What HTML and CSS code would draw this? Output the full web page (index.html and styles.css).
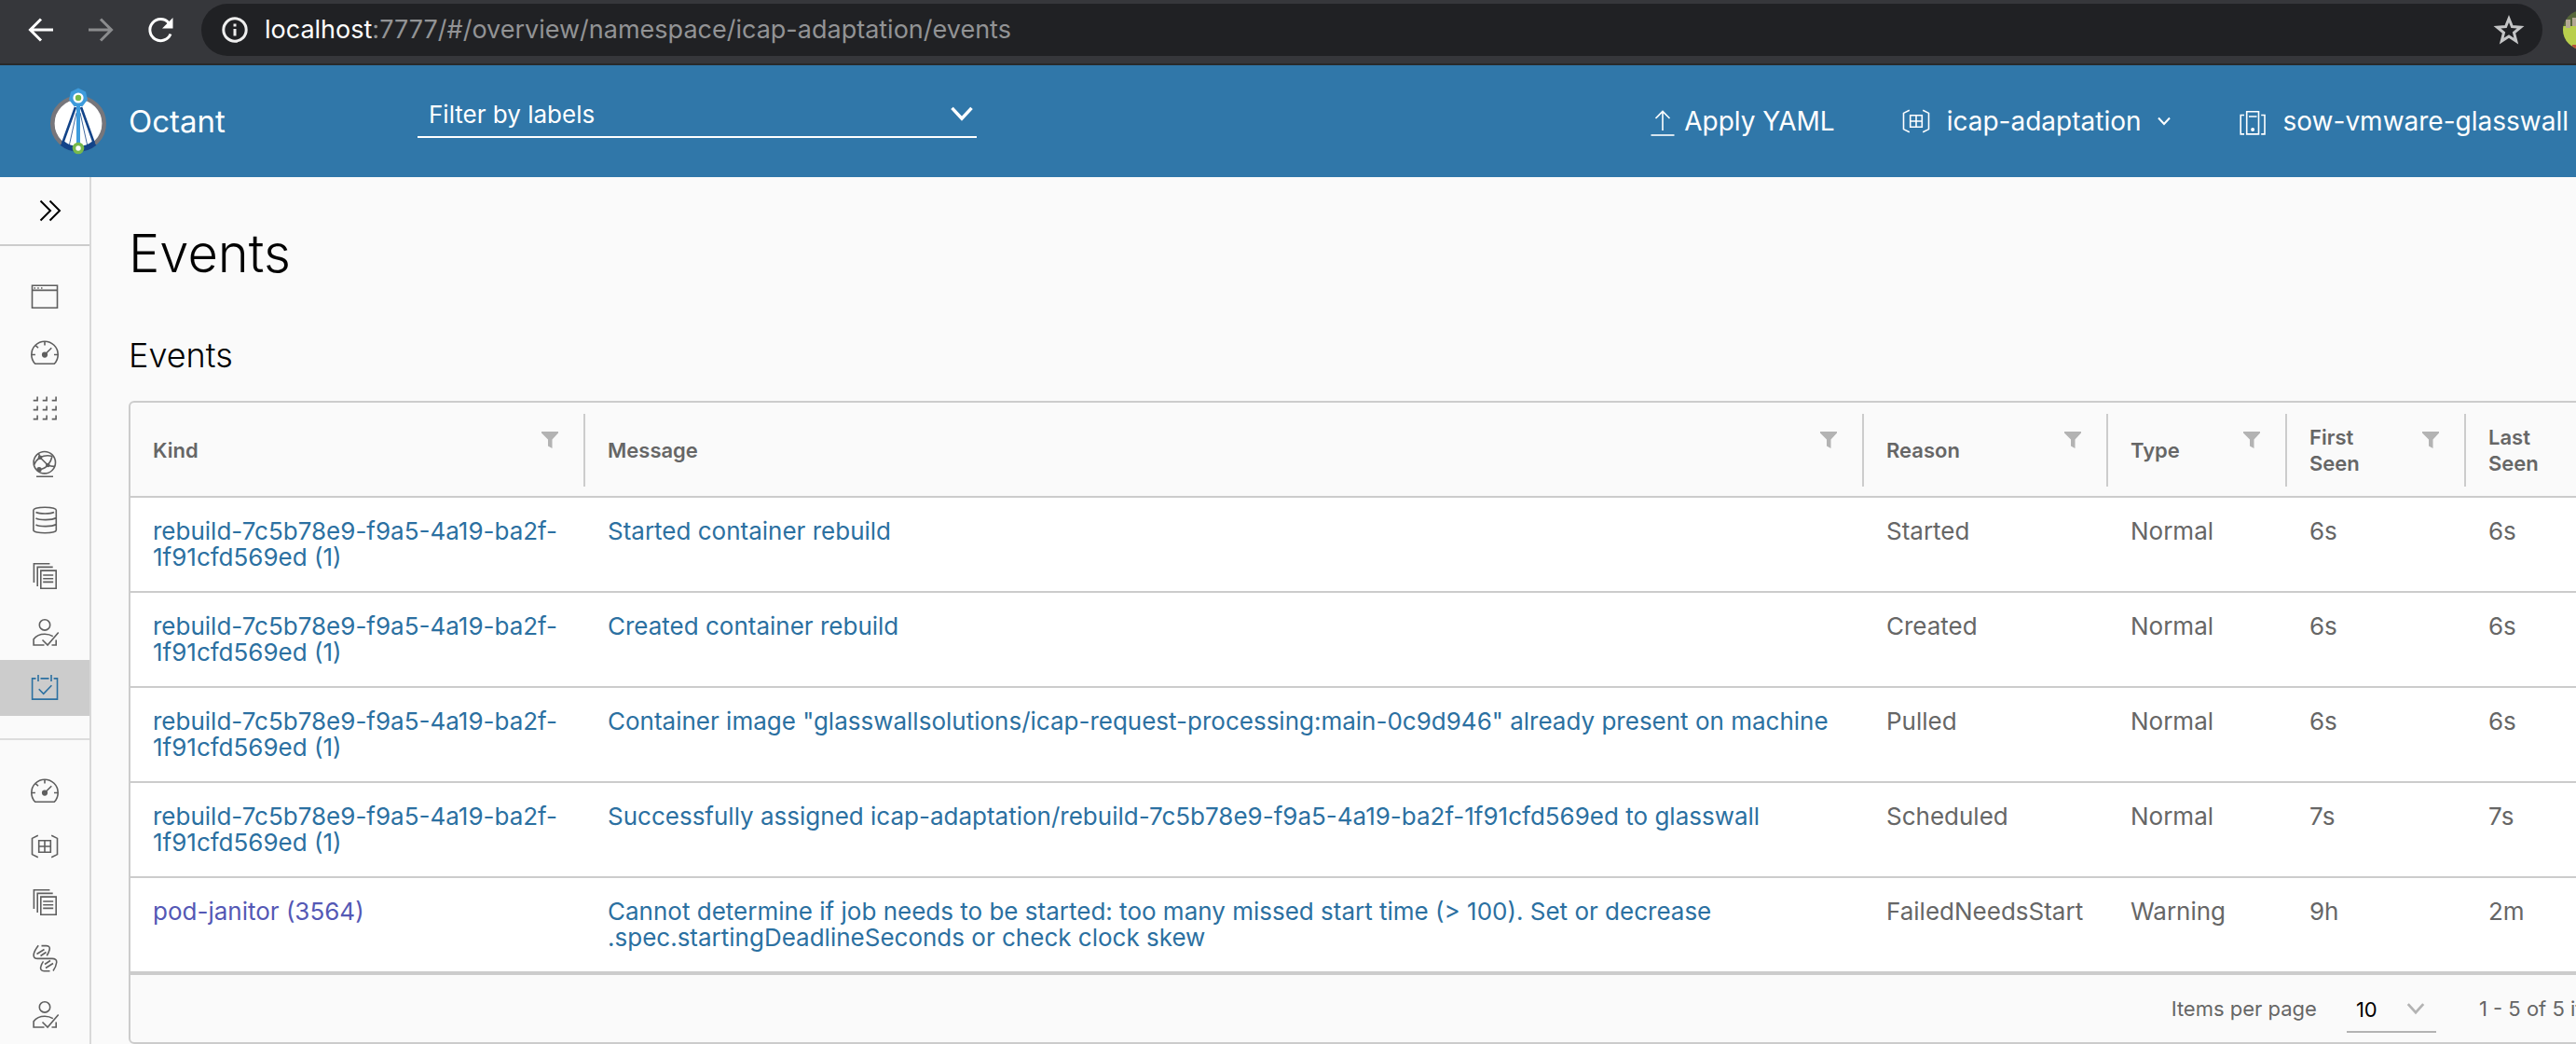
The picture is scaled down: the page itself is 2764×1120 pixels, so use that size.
FILE: index.html
```html
<!DOCTYPE html>
<html lang="en">
<head>
<meta charset="utf-8">
<meta name="viewport" content="width=device-width, initial-scale=1">
<title>Octant</title>
<link rel="stylesheet" href="styles.css">
</head>
<body>
<svg class="sprite" aria-hidden="true">
  <symbol id="i-gauge" viewBox="0 0 34 34">
    <path d="M6.7 29.2h20.6a14.2 14.2 0 1 0-20.6 0z"/>
    <path d="M17 5.5v4M2.9 19.5h4M27 19.5h4M7.3 9.6l2.7 2.7M17 19.5l7.3-7.2"/>
    <circle class="solid" cx="17" cy="19.6" r="2.3"/>
  </symbol>
  <symbol id="i-namespace" viewBox="0 0 34 34">
    <path d="M9.8 5.2L3.5 8.4v17.2l6.3 3.2M24.2 5.2l6.3 3.2v17.2l-6.3 3.2M10.7 10.7h12.6v12.6H10.7zM17 10.7v12.6M10.7 17h12.6"/>
  </symbol>
  <symbol id="i-docs" viewBox="0 0 34 34">
    <path d="M5.4 24V3.7h17M9.2 28V7.4h16.5M12.8 11.1h16.4v19.2H12.8zM15.2 16h11M15.2 19.7h11M15.2 23.4h11"/>
  </symbol>
  <symbol id="i-user" viewBox="0 0 34 34">
    <circle cx="17" cy="9.4" r="5.7"/>
    <path d="M16.5 31H5.1v-6.2c2.700-3.800 7-5.600 11.900-5.600 3.300 0 6.300.8 8.800 2.400M29.200 25.500V31h-4.700M14.500 25.500l5.600 5.600L31.700 17.500"/>
  </symbol>
  <symbol id="i-chevron" viewBox="0 0 16 16">
    <path d="M2 4.500l6 6.500 6-6.500"/>
  </symbol>
  <symbol id="i-filter" viewBox="0 0 18 18">
    <path d="M0 0h18v1.500l-6.500 7V18L7 15.500v-7l-7-7z"/>
  </symbol>
</svg>

<div class="page">
  <div class="toolbar">
    <nav class="toolbar-nav" aria-label="Browser">
      <button type="button" class="tool" aria-label="Back">
        <svg viewBox="0 0 32 32"><path d="M29 16H5M16 4.500L4.500 16 16 27.500"/></svg>
      </button>
      <button type="button" class="tool dim" aria-label="Forward">
        <svg viewBox="0 0 32 32"><path d="M3 16h24M16 4.500L27.500 16 16 27.500"/></svg>
      </button>
      <button type="button" class="tool" aria-label="Reload">
        <svg viewBox="0 0 32 32"><path d="M27 20.500A11.500 11.500 0 1 1 25 8.500"/><path class="solid" d="M29.500 3v11.500H18z"/></svg>
      </button>
    </nav>
    <div class="address">
      <svg class="info" viewBox="0 0 28 28"><circle cx="14" cy="14" r="12.200"/><path d="M14 13v7.500M14 7.500v3"/></svg>
      <span class="url"><span class="host">localhost</span>:7777/#/overview/namespace/icap-adaptation/events</span>
      <button type="button" class="star" aria-label="Bookmark">
        <svg viewBox="0 0 34 34"><path d="M17 5l3.400 8.600 9.200.6-7.100 5.900 2.300 9-7.800-5-7.800 5 2.300-9-7.100-5.900 9.200-.6z"/></svg>
      </button>
    </div>
    <svg class="avatar" viewBox="0 0 42 42">
      <path class="av-sky" d="M0 0h42v42H0z"/>
      <path class="av-grass" d="M0 17h42v25H0z"/>
      <path class="av-stone" d="M3 10h5v9H3zM10 8h5v9h-5z"/>
      <path class="av-red" d="M10 37h20v5H10z"/>
    </svg>
  </div>

  <header class="header">
    <div class="brand">
      <svg class="logo" viewBox="0 0 60 72">
        <circle cx="30" cy="38.500" r="27.700" fill="#fff" stroke="#77767b" stroke-width="4.600"/>
        <path d="M12.500 59.500a27.500 27.500 0 0 0 35 0" fill="none" stroke="#134489" stroke-width="6"/>
        <path d="M27 21L13 60M33 21l14 39" stroke="#134489" stroke-width="2.600"/>
        <path d="M28 27l-7.500 34M32 27l7.500 34" stroke="#134489" stroke-width=".8"/>
        <path d="M30 12v54" stroke="#3d9bdc" stroke-width="4"/>
        <path d="M30 .5l8 3.900 2 8.700-5.500 7h-9l-5.500-7 2-8.700z" fill="#3d9bdc"/>
        <circle cx="30" cy="11" r="5.600" fill="#fff"/>
        <circle cx="30" cy="11" r="3.200" fill="#77b94c"/>
        <circle cx="30" cy="65" r="4.500" fill="#fff" stroke="#77b94c" stroke-width="3.600"/>
      </svg>
      <span class="brand-name">Octant</span>
    </div>
    <div class="picker filter-picker">
      <select aria-label="Filter by labels"><option>Filter by labels</option></select>
      <svg class="picker-chevron" viewBox="0 0 16 16"><use href="#i-chevron"/></svg>
    </div>
    <div class="actions">
      <button type="button" class="action tight">
        <svg class="action-icon" viewBox="0 0 34 34"><path d="M17 27V6.500M9.500 14L17 6.500l7.500 7.500"/><path d="M4.500 32h25"/></svg>
        Apply YAML
      </button>
      <button type="button" class="action">
        <svg class="action-icon"><use href="#i-namespace"/></svg>
        icap-adaptation
        <svg class="action-chevron"><use href="#i-chevron"/></svg>
      </button>
      <button type="button" class="action">
        <svg class="action-icon" viewBox="0 0 34 34"><path d="M10.700 6.700h12.800v24.200H10.700zM13 12h8.500M8 10.500H4.200v20.400H8M26.200 10.500H30v20.400h-3.800"/><circle class="solid" cx="17.100" cy="26" r="1.200"/></svg>
        sow-vmware-glasswall
        <svg class="action-chevron"><use href="#i-chevron"/></svg>
      </button>
    </div>
  </header>

  <div class="layout">
    <nav class="sidebar" aria-label="Main">
      <button type="button" class="expand" aria-label="Expand navigation">
        <svg viewBox="0 0 24 24"><path d="M1.500 1.500L12 12 1.500 22.500M11.500 1.500L22 12 11.500 22.500"/></svg>
      </button>
      <ul class="nav-group">
        <li><a href="#applications" class="nav-link" aria-label="Applications"><svg viewBox="0 0 34 34"><path d="M3.500 5.200h27v24h-27zM3.500 10.400h27M5.500 8h1.500M9.200 8h1.500M13 8h1.500"/></svg></a></li>
        <li><a href="#overview" class="nav-link" aria-label="Namespace overview"><svg><use href="#i-gauge"/></svg></a></li>
        <li><a href="#workloads" class="nav-link" aria-label="Workloads"><svg viewBox="0 0 34 34"><path d="M4.700 8.600h4.400V4.500M14.700 8.600h4.400V4.500M24.700 8.600h4.400V4.500M4.700 18.600h4.400v-4.100M14.700 18.600h4.400v-4.100M24.700 18.600h4.400v-4.100M4.700 28.600h4.400v-4.100M14.700 28.600h4.400v-4.100M24.700 28.600h4.400v-4.100"/></svg></a></li>
        <li><a href="#discovery" class="nav-link" aria-label="Discovery and load balancing"><svg viewBox="0 0 34 34"><circle cx="16.800" cy="15.200" r="11.700"/><path d="M8 30.300h18M12 9.700l8.300 8.300M11 22.700c4-.3 7-2 9.300-4.700 2.500-3 4-6 4.700-9.500M12 9.700c5-2.400 9-2.300 13-1.200M20.300 18c3 1.200 5 1.500 7.500 1.300M12 9.700c-3.200 2-5 4.500-6.500 8M10.500 5.500L12 9.700"/><circle class="solid" cx="12" cy="9.700" r="1.500"/><circle class="solid" cx="20.300" cy="18" r="1.500"/><circle class="solid" cx="11" cy="22.700" r="1.900"/></svg></a></li>
        <li><a href="#config" class="nav-link" aria-label="Config and storage"><svg viewBox="0 0 34 34"><path d="M4.900 6.300c0-4 24.400-4 24.400 0v21.400c0 4-24.400 4-24.400 0zM7.500 8.500c4 2 15.500 2 19.500 0M7.500 15c4 2.200 17 2.300 21.800-.5M7.500 22c4 2.200 17 2.300 21.800-.5"/></svg></a></li>
        <li><a href="#crds" class="nav-link" aria-label="Custom resources"><svg><use href="#i-docs"/></svg></a></li>
        <li><a href="#rbac" class="nav-link" aria-label="RBAC"><svg><use href="#i-user"/></svg></a></li>
        <li><a href="#events" class="nav-link active" aria-label="Events" aria-current="page"><svg viewBox="0 0 34 34"><path d="M7.500 6.900H3.600v22.200h26.900V6.900h-3.900M12.500 6.900h9M10 3v7M24 3v7M10.700 18.300l5 5 8.700-9"/></svg></a></li>
      </ul>
      <ul class="nav-group">
        <li><a href="#cluster" class="nav-link" aria-label="Cluster overview"><svg><use href="#i-gauge"/></svg></a></li>
        <li><a href="#namespaces" class="nav-link" aria-label="Namespaces"><svg><use href="#i-namespace"/></svg></a></li>
        <li><a href="#cluster-crds" class="nav-link" aria-label="Cluster custom resources"><svg><use href="#i-docs"/></svg></a></li>
        <li><a href="#webhooks" class="nav-link" aria-label="Webhooks"><svg viewBox="0 0 34 34"><path d="M10.200 3.200C7 7.500 5 11.500 5.100 14c.1 2.300 1.900 3.400 4.400 3.400H25c3 0 5 1.400 4.700 4.100-.3 2.800-1.500 6-3.700 9M13.500 3.600h5.300c3 0 4 1.900 3.200 4.700-.5 1.900-1.500 4-2.800 6M22.500 30.700h-6.200c-3 0-4.300-1.900-3.400-4.900.5-1.900 1.200-3.500 2.600-5.400M8.500 12.500l8-5M12.500 14.500l6-4M17 23.500l6-4M18 27.500l8-5"/></svg></a></li>
        <li><a href="#cluster-rbac" class="nav-link" aria-label="Cluster RBAC"><svg><use href="#i-user"/></svg></a></li>
      </ul>
    </nav>

    <main class="content">
      <h1>Events</h1>
      <h2>Events</h2>
      <div class="datagrid">
        <table>
          <colgroup>
            <col class="c-kind"><col><col class="c-reason"><col class="c-short"><col class="c-short"><col class="c-last">
          </colgroup>
          <thead>
            <tr>
              <th scope="col"><div class="head"><span>Kind</span><button type="button" aria-label="Filter kind"><svg><use href="#i-filter"/></svg></button></div></th>
              <th scope="col"><div class="head"><span>Message</span><button type="button" aria-label="Filter message"><svg><use href="#i-filter"/></svg></button></div></th>
              <th scope="col"><div class="head"><span>Reason</span><button type="button" aria-label="Filter reason"><svg><use href="#i-filter"/></svg></button></div></th>
              <th scope="col"><div class="head"><span>Type</span><button type="button" aria-label="Filter type"><svg><use href="#i-filter"/></svg></button></div></th>
              <th scope="col"><div class="head"><span>First Seen</span><button type="button" aria-label="Filter first seen"><svg><use href="#i-filter"/></svg></button></div></th>
              <th scope="col"><div class="head"><span>Last Seen</span><button type="button" aria-label="Filter last seen"><svg><use href="#i-filter"/></svg></button></div></th>
            </tr>
          </thead>
          <tbody>
            <tr>
              <td><a href="#e1">rebuild-7c5b78e9-f9a5-4a19-ba2f-1f91cfd569ed (1)</a></td>
              <td><a href="#e1">Started container rebuild</a></td>
              <td>Started</td><td>Normal</td><td>6s</td><td>6s</td>
            </tr>
            <tr>
              <td><a href="#e2">rebuild-7c5b78e9-f9a5-4a19-ba2f-1f91cfd569ed (1)</a></td>
              <td><a href="#e2">Created container rebuild</a></td>
              <td>Created</td><td>Normal</td><td>6s</td><td>6s</td>
            </tr>
            <tr>
              <td><a href="#e3">rebuild-7c5b78e9-f9a5-4a19-ba2f-1f91cfd569ed (1)</a></td>
              <td><a href="#e3">Container image "glasswallsolutions/icap-request-processing:main-0c9d946" already present on machine</a></td>
              <td>Pulled</td><td>Normal</td><td>6s</td><td>6s</td>
            </tr>
            <tr>
              <td><a href="#e4">rebuild-7c5b78e9-f9a5-4a19-ba2f-1f91cfd569ed (1)</a></td>
              <td><a href="#e4">Successfully assigned icap-adaptation/rebuild-7c5b78e9-f9a5-4a19-ba2f-1f91cfd569ed to glasswall</a></td>
              <td>Scheduled</td><td>Normal</td><td>7s</td><td>7s</td>
            </tr>
            <tr>
              <td><a href="#e5" class="seen">pod-janitor (3564)</a></td>
              <td><a href="#e5">Cannot determine if job needs to be started: too many missed start time (&gt; 100). Set or decrease .spec.startingDeadlineSeconds or check clock skew</a></td>
              <td>FailedNeedsStart</td><td>Warning</td><td>9h</td><td>2m</td>
            </tr>
          </tbody>
        </table>
        <div class="pager">
          <label for="page-size">Items per page</label>
          <div class="picker size-picker">
            <select id="page-size"><option>10</option></select>
            <svg class="picker-chevron" viewBox="0 0 16 16"><use href="#i-chevron"/></svg>
          </div>
          <span class="range">1 - 5 of 5 items</span>
        </div>
      </div>
    </main>
  </div>
</div>
</body>
</html>
```
FILE: styles.css
```css
:root {
  --line: #ccc;
  --surface: #fafafa;
  --text: #666;
  --link: #2b70a1;
  --header: #3077a9;
}

* { box-sizing: border-box; }

body {
  margin: 0;
  overflow: hidden;
  background: var(--surface);
  color: #000;
  font-family: Inter, "Open Sans", sans-serif;
}

button, select {
  margin: 0;
  padding: 0;
  border: 0;
  border-radius: 0;
  background: none;
  color: inherit;
  font: inherit;
}

button { cursor: pointer; }
a { text-decoration: none; }

svg {
  display: block;
  flex: none;
  fill: none;
  stroke: currentColor;
}

.solid { fill: currentColor; }
.sprite { position: absolute; width: 0; height: 0; }

/* The app is wider than the window; the right edge is cut off. */
.page { width: calc(100% + 114px); }

/* Browser toolbar */
.toolbar {
  display: flex;
  align-items: center;
  gap: 22px;
  padding: 4px 86px 8px 28px;
  border-bottom: 2px solid #28292a;
  background: #36373b;
}

.toolbar-nav { display: flex; gap: 32px; margin-right: 6px; }
.tool { color: #fff; }
.tool svg { width: 32px; height: 32px; stroke-width: 3; }
.tool.dim { color: #8b8c8e; }
.tool .solid { stroke: none; }

.address {
  display: flex;
  flex: 1;
  align-items: center;
  gap: 18px;
  height: 56px;
  padding: 0 19px 0 22px;
  border-radius: 28px;
  background: #202124;
  color: #929395;
  font-size: 27px;
  line-height: 32px;
}

.info { width: 28px; height: 28px; stroke: #eee; stroke-width: 3; }
.host { color: #fff; }
.star { margin-left: auto; color: #c4c5c6; }
.star svg { width: 34px; height: 34px; stroke-width: 3; }

.avatar { width: 42px; height: 42px; border-radius: 50%; stroke: none; }
.av-sky { fill: #56663a; }
.av-grass { fill: #b9cf4d; }
.av-stone { fill: #b3a793; }
.av-red { fill: #b5533a; }

/* App header */
.header {
  display: flex;
  align-items: center;
  height: 120px;
  padding: 0 90px 0 54px;
  background: var(--header);
  color: #fff;
}

.brand { display: flex; flex: 0 0 394px; align-items: center; gap: 24px; }
.logo { width: 60px; height: 72px; stroke: none; }
.brand-name { font-size: 33px; line-height: 40px; }

.picker { display: grid; align-items: center; }
.picker > * { grid-area: 1 / 1; }
.picker select { width: 100%; height: 52px; appearance: none; cursor: pointer; }
.picker-chevron { justify-self: end; pointer-events: none; }

.filter-picker { width: 600px; margin-bottom: 16px; font-size: 26px; }
.filter-picker select { padding: 3px 48px 0 12px; border-bottom: 2px solid #fff; }
.filter-picker .picker-chevron { width: 28px; height: 28px; margin-right: 2px; stroke-width: 2; }
.filter-picker option { color: #000; }

.actions { display: flex; gap: 70px; margin-left: auto; }

.action {
  display: flex;
  align-items: center;
  gap: 16px;
  font-size: 28px;
  line-height: 36px;
  white-space: nowrap;
}

.action.tight { gap: 6px; }
.action-icon { width: 34px; height: 34px; stroke-width: 1.6; }
.action-chevron { width: 16px; height: 16px; stroke-width: 2; }

/* Sidebar */
.layout { display: flex; min-height: calc(100vh - 190px); }

.sidebar {
  flex: 0 0 98px;
  border-right: 2px solid #d8d8d8;
}

.expand {
  display: flex;
  align-items: center;
  width: 100%;
  height: 74px;
  padding-left: 42px;
  border-bottom: 2px solid var(--line);
}

.expand svg { width: 24px; height: 24px; stroke-width: 2; }

.nav-group { margin: 0; padding: 24px 0 0; list-style: none; }
.nav-group + .nav-group { margin-top: 24px; border-top: 2px solid #ddd; }

.nav-link {
  display: flex;
  align-items: center;
  justify-content: center;
  height: 60px;
  color: #5f5f5f;
}

.nav-link svg { width: 34px; height: 34px; stroke-width: 1.6; }
.nav-link.active { background: #ccc; color: var(--link); }

/* Content */
.content { flex: 1; min-width: 0; padding: 50px 40px 0; }
h1, h2 { margin: 0; font-weight: 300; }
h1 { font-size: 56px; line-height: 64px; }
h2 { margin: 57px 0 29px; font-size: 36px; line-height: 40px; }

.datagrid {
  overflow: hidden;
  border: 2px solid var(--line);
  border-radius: 6px;
  color: var(--text);
}

table {
  width: 100%;
  border-collapse: separate;
  border-spacing: 0;
  table-layout: fixed;
}

.c-kind { width: 488px; }
.c-reason { width: 262px; }
.c-short { width: 192px; }
.c-last { width: 190px; }

th {
  padding: 12px 0 10px;
  border-bottom: 2px solid var(--line);
  font-size: 22px;
  font-weight: 600;
  line-height: 28px;
  text-align: left;
}

.head {
  display: flex;
  align-items: center;
  justify-content: space-between;
  gap: 20px;
  height: 78px;
  padding: 0 27px 0 24px;
  border-right: 2px solid var(--line);
}

th:last-child .head { border-right: 0; }
.head button { align-self: flex-start; margin-top: 19px; color: #b3b3b3; }
.head svg { width: 18px; height: 18px; fill: currentColor; stroke: none; }

td {
  height: 102px;
  padding: 22px 24px;
  border-bottom: 2px solid var(--line);
  background: #fff;
  font-size: 26px;
  line-height: 28px;
  vertical-align: top;
}

tbody tr:last-child td { height: 104px; border-bottom-width: 4px; }
td a { color: var(--link); }
td a.seen { color: #5458b5; }

.pager {
  display: flex;
  align-items: center;
  justify-content: flex-end;
  height: 72px;
  padding-right: 22px;
  font-size: 22px;
  line-height: 28px;
}

.size-picker { width: 96px; margin: 0 46px 0 32px; color: #000; }
.size-picker select { padding: 4px 32px 0 10px; border-bottom: 2px solid #b3b3b3; }
.size-picker .picker-chevron { width: 22px; height: 22px; margin-right: 11px; color: #b3b3b3; stroke-width: 2; }
```
